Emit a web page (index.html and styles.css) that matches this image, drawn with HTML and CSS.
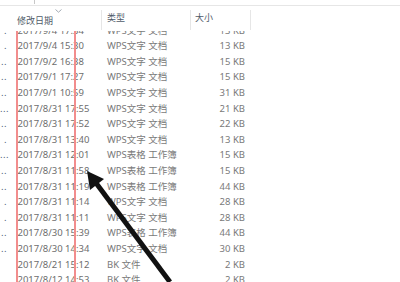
FILE: index.html
```html
<!DOCTYPE html>
<html lang="zh">
<head>
<meta charset="utf-8">
<link rel="stylesheet" href="styles.css">
</head>
<body>
<div class="top"><span class="tick"></span></div>
<div class="header">
  <div class="h-dots"></div>
  <div class="h-date">
    <svg class="chev" width="7" height="4" viewBox="0 0 7 4"><path d="M0.5 0.5 L3.5 3.2 L6.5 0.5" fill="none" stroke="#9aa3ad" stroke-width="0.9"/></svg>
    <span class="h-label">修改日期</span>
  </div>
  <div class="sep"></div>
  <div class="h-type">类型</div>
  <div class="sep"></div>
  <div class="h-size">大小</div>
  <div class="sep"></div>
</div>
<div class="viewport">
  <div class="list">
    <div class="row"><span class="dots">.</span><span class="date">2017/9/4 17:34</span><span class="type">WPS文字 文档</span><span class="size">13 KB</span></div>
    <div class="row"><span class="dots">.</span><span class="date">2017/9/4 15:30</span><span class="type">WPS文字 文档</span><span class="size">13 KB</span></div>
    <div class="row"><span class="dots">..</span><span class="date">2017/9/2 16:38</span><span class="type">WPS文字 文档</span><span class="size">15 KB</span></div>
    <div class="row"><span class="dots">..</span><span class="date">2017/9/1 17:27</span><span class="type">WPS文字 文档</span><span class="size">15 KB</span></div>
    <div class="row"><span class="dots">..</span><span class="date">2017/9/1 10:59</span><span class="type">WPS文字 文档</span><span class="size">31 KB</span></div>
    <div class="row"><span class="dots">...</span><span class="date">2017/8/31 17:55</span><span class="type">WPS文字 文档</span><span class="size">21 KB</span></div>
    <div class="row"><span class="dots">..</span><span class="date">2017/8/31 17:52</span><span class="type">WPS文字 文档</span><span class="size">22 KB</span></div>
    <div class="row"><span class="dots">.</span><span class="date">2017/8/31 13:40</span><span class="type">WPS文字 文档</span><span class="size">13 KB</span></div>
    <div class="row"><span class="dots">...</span><span class="date">2017/8/31 12:01</span><span class="type">WPS表格 工作簿</span><span class="size">15 KB</span></div>
    <div class="row"><span class="dots">..</span><span class="date">2017/8/31 11:58</span><span class="type">WPS表格 工作簿</span><span class="size">15 KB</span></div>
    <div class="row"><span class="dots">..</span><span class="date">2017/8/31 11:19</span><span class="type">WPS表格 工作簿</span><span class="size">44 KB</span></div>
    <div class="row"><span class="dots">.</span><span class="date">2017/8/31 11:14</span><span class="type">WPS文字 文档</span><span class="size">28 KB</span></div>
    <div class="row"><span class="dots">.</span><span class="date">2017/8/31 11:11</span><span class="type">WPS文字 文档</span><span class="size">28 KB</span></div>
    <div class="row"><span class="dots">..</span><span class="date">2017/8/30 15:39</span><span class="type">WPS表格 工作簿</span><span class="size">44 KB</span></div>
    <div class="row"><span class="dots">..</span><span class="date">2017/8/30 14:34</span><span class="type">WPS文字 文档</span><span class="size">30 KB</span></div>
    <div class="row"><span class="dots"></span><span class="date">2017/8/21 15:12</span><span class="type">BK 文件</span><span class="size">2 KB</span></div>
    <div class="row"><span class="dots"></span><span class="date">2017/8/12 14:53</span><span class="type">BK 文件</span><span class="size">2 KB</span></div>
  </div>
</div>
<div class="highlight"></div>
<svg class="arrow" width="400" height="282" viewBox="0 0 400 282">
  <line x1="96" y1="183" x2="170" y2="282" stroke="#111" stroke-width="5"/>
  <polygon points="87,171 104,179 90,190" fill="#111"/>
</svg>
</body>
</html>
```

FILE: styles.css
```css
* { box-sizing: border-box; }
html, body { margin: 0; padding: 0; background: #fff; }
body {
  width: 400px;
  height: 282px;
  overflow: hidden;
  position: relative;
  font-family: "Noto Sans", "Noto Sans CJK SC", sans-serif;
  font-size: 9.5px;
}
.top {
  height: 6px;
  border-bottom: 1px solid #e6e6e6;
  display: flex;
  padding-left: 34px;
}
.tick {
  width: 1px;
  height: 4px;
  background: #c8c8c8;
}
.header {
  height: 25px;
  display: flex;
  align-items: stretch;
  color: #4f5b69;
  background: #fff;
  position: relative;
  z-index: 1;
}
.h-dots { width: 16px; }
.h-date {
  width: 85px;
  display: flex;
  flex-direction: column;
  padding-top: 3px;
}
.chev { align-self: center; margin-left: -1px; }
.h-label {
  padding-left: 1px;
  line-height: 14px;
  margin-top: 1px;
  font-size: 9px;
}
.h-type, .h-size {
  display: flex;
  align-items: center;
  padding-bottom: 2px;
  font-size: 9px;
}
.h-type { width: 88px; padding-left: 5px; }
.h-size { width: 59px; padding-left: 4px; }
.sep {
  width: 1px;
  background: #e6e6e6;
  margin: 4px 0 1px;
}
.viewport {
  height: 251px;
  overflow: hidden;
}
.list {
  margin-top: -8.4px;
}
.row {
  display: grid;
  grid-template-columns: 16px 85px 89px 60px;
  height: 15.6px;
  line-height: 15.6px;
  white-space: nowrap;
}
.dots {
  text-align: right;
  padding-right: 9px;
  color: #4a5a78;
  letter-spacing: 0.5px;
}
.date { color: #6d6d6d; padding-left: 1.5px; }
.type { color: #7a7a7a; padding-left: 6px; }
.size { color: #7a7a7a; text-align: right; padding-right: 5px; }
.highlight {
  position: absolute;
  left: 16px;
  top: 8px;
  width: 60px;
  height: 274px;
  border: 2px solid #f28d8d;
  border-bottom: none;
}
.arrow {
  position: absolute;
  left: 0;
  top: 0;
}
```
